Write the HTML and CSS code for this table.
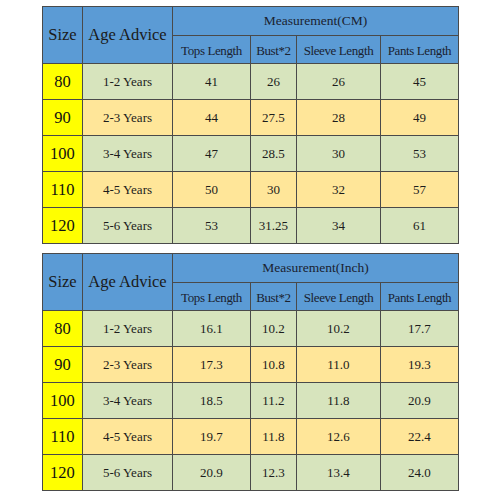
FILE: index.html
```html
<!DOCTYPE html>
<html lang="en">
<head>
    <meta charset="UTF-8">
    <title>Size Chart</title>
    <link rel="stylesheet" href="styles.css">
</head>
<body>
    <div class="chart">
        <table class="size-table">
            <colgroup>
                <col class="c-size"><col class="c-age"><col class="c-tops"><col class="c-bust"><col class="c-sleeve"><col class="c-pants">
            </colgroup>
            <tr class="head-top">
                <th rowspan="2" class="big">Size</th>
                <th rowspan="2" class="big">Age Advice</th>
                <th colspan="4" class="group">Measurement(CM)</th>
            </tr>
            <tr class="head-sub">
                <th>Tops Length</th><th>Bust*2</th><th>Sleeve Length</th><th>Pants Length</th>
            </tr>
            <tr class="green"><td class="size">80</td><td>1-2 Years</td><td>41</td><td>26</td><td>26</td><td>45</td></tr>
            <tr class="orange"><td class="size">90</td><td>2-3 Years</td><td>44</td><td>27.5</td><td>28</td><td>49</td></tr>
            <tr class="green"><td class="size">100</td><td>3-4 Years</td><td>47</td><td>28.5</td><td>30</td><td>53</td></tr>
            <tr class="orange"><td class="size">110</td><td>4-5 Years</td><td>50</td><td>30</td><td>32</td><td>57</td></tr>
            <tr class="green"><td class="size">120</td><td>5-6 Years</td><td>53</td><td>31.25</td><td>34</td><td>61</td></tr>
        </table>

        <table class="size-table">
            <colgroup>
                <col class="c-size"><col class="c-age"><col class="c-tops"><col class="c-bust"><col class="c-sleeve"><col class="c-pants">
            </colgroup>
            <tr class="head-top">
                <th rowspan="2" class="big">Size</th>
                <th rowspan="2" class="big">Age Advice</th>
                <th colspan="4" class="group">Measurement(Inch)</th>
            </tr>
            <tr class="head-sub">
                <th>Tops Length</th><th>Bust*2</th><th>Sleeve Length</th><th>Pants Length</th>
            </tr>
            <tr class="green"><td class="size">80</td><td>1-2 Years</td><td>16.1</td><td>10.2</td><td>10.2</td><td>17.7</td></tr>
            <tr class="orange"><td class="size">90</td><td>2-3 Years</td><td>17.3</td><td>10.8</td><td>11.0</td><td>19.3</td></tr>
            <tr class="green"><td class="size">100</td><td>3-4 Years</td><td>18.5</td><td>11.2</td><td>11.8</td><td>20.9</td></tr>
            <tr class="orange"><td class="size">110</td><td>4-5 Years</td><td>19.7</td><td>11.8</td><td>12.6</td><td>22.4</td></tr>
            <tr class="green"><td class="size">120</td><td>5-6 Years</td><td>20.9</td><td>12.3</td><td>13.4</td><td>24.0</td></tr>
        </table>
    </div>
</body>
</html>
```

FILE: styles.css
```css
body {
    margin: 0;
    background: #fff;
    font-family: "Liberation Serif", "Times New Roman", serif;
    color: #1c1c1c;
}
.chart {
    display: flex;
    flex-direction: column;
    align-items: center;
    gap: 9px;
    padding-top: 6px;
    padding-left: 1px;
}
.size-table {
    border-collapse: collapse;
    table-layout: fixed;
    width: 416px;
    border: 1px solid #4a4a4a;
}
.c-size { width: 40px; }
.c-age { width: 90px; }
.c-tops { width: 78px; }
.c-bust { width: 46px; }
.c-sleeve { width: 84px; }
.c-pants { width: 78px; }
th, td {
    border: 1px solid #4a4a4a;
    padding: 0;
    text-align: center;
    white-space: nowrap;
    overflow: hidden;
}
th {
    background-color: #5b9bd5;
    font-weight: normal;
    font-size: 13px;
    color: #1a2230;
}
th.group {
    font-size: 13.5px;
}
th.big {
    font-size: 16.5px;
    color: #1a1a1a;
}
.head-top { height: 29px; }
.head-sub { height: 28px; }
.head-sub th {
    letter-spacing: -0.4px;
    padding-top: 2px;
}
tr.green, tr.orange { height: 36px; }
td {
    font-size: 13px;
}
.green td { background-color: #d7e4bd; }
.orange td { background-color: #ffe699; }
td.size {
    background-color: #ffff00;
    font-size: 16.5px;
    color: #111;
}
```
